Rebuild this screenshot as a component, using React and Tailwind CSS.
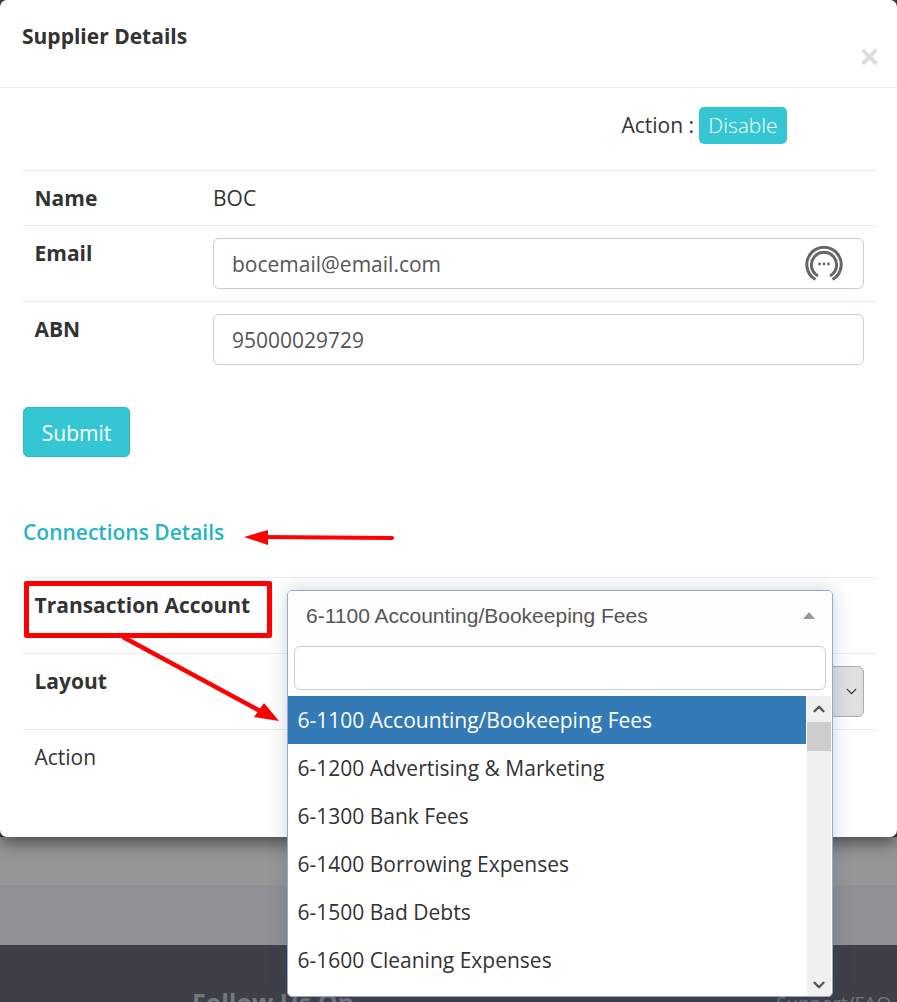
import { ChevronDown, ChevronUp } from "lucide-react";

const accounts = [
  "6-1200 Advertising & Marketing",
  "6-1300 Bank Fees",
  "6-1400 Borrowing Expenses",
  "6-1500 Bad Debts",
  "6-1600 Cleaning Expenses",
];

function PasswordIcon() {
  return (
    <svg viewBox="0 0 38 38" className="absolute right-[20px] top-[6px] w-[38px] h-[38px]" fill="none" stroke="#666666" strokeWidth="3">
      <path d="M10.5 34.5 A17.2 17.2 0 1 1 27.5 34.5" />
      <path d="M13 31 A12.6 12.6 0 1 1 25 31" />
      <circle cx="14.5" cy="19" r="1.4" fill="#666666" stroke="none" />
      <circle cx="19" cy="19" r="1.4" fill="#666666" stroke="none" />
      <circle cx="23.5" cy="19" r="1.4" fill="#666666" stroke="none" />
    </svg>
  );
}

function TransactionDropdown() {
  return (
    <div className="absolute left-[287px] top-[590px] w-[546px] h-[407px] bg-white border border-[#98a8c8] rounded-[5px] shadow-[0_0_18px_rgba(60,70,110,0.25)] overflow-hidden font-['Open_Sans',sans-serif]">
      <div className="h-[49px] flex items-center justify-between pl-[18px] pr-[17px] bg-[#fdfdfd] text-[#555555] text-[21px] font-['Liberation_Sans',sans-serif]">
        <span>6-1100 Accounting/Bookeeping Fees</span>
        <span className="w-0 h-0 border-x-[6px] border-x-transparent border-b-[7px] border-b-[#999999]"></span>
      </div>
      <div className="px-[6px] pt-[6px] pb-[6px]">
        <div className="h-[44px] border border-[#c5cde0] rounded-[6px] bg-white"></div>
      </div>
      <div className="flex">
        <ul className="w-[518px] text-[21px] leading-[30px] text-[#333333]">
          <li className="h-[48px] flex items-center pl-[9.5px] bg-[#337ab7] text-white">6-1100 Accounting/Bookeeping Fees</li>
          {accounts.map((name) => (
            <li key={name} className="h-[48px] flex items-center pl-[9.5px]">{name}</li>
          ))}
        </ul>
        <div className="flex-1 h-[301px] ml-px mr-px bg-[#f0f0f0] flex flex-col text-[#555555]">
          <div className="h-[26px] flex items-center justify-center">
            <ChevronUp size={18} strokeWidth={3.2} />
          </div>
          <div className="h-[29px] bg-[#cdcdcd]"></div>
          <div className="flex-1 flex items-end justify-center pb-[3px]">
            <ChevronDown size={18} strokeWidth={3.2} />
          </div>
        </div>
      </div>
    </div>
  );
}

function Annotations() {
  return (
    <>
      <div className="absolute left-[24px] top-[581px] w-[248px] h-[57px] border-[5px] border-[#ff0000] rounded-[2px]"></div>
      <svg className="absolute left-0 top-0 w-[897px] h-[1002px] pointer-events-none" viewBox="0 0 897 1002" fill="none">
        <path d="M392 538 L262 537" stroke="#ff0000" strokeWidth="4" strokeLinecap="round" />
        <path d="M244 537 L268 530 L268 545 Z" fill="#ff0000" />
        <path d="M123 637 L262 712" stroke="#ff0000" strokeWidth="4.5" />
        <path d="M279 721 L254 717 L264 703 Z" fill="#ff0000" />
      </svg>
    </>
  );
}

export default function App() {
  return (
    <div className="relative w-[897px] h-[1002px] overflow-hidden bg-[#3d4047] font-['Open_Sans',sans-serif] text-[#333333]">
      {/* MODAL */}
      <div className="relative z-10 h-[837px] bg-white rounded-[7px] shadow-[0_5px_18px_rgba(0,0,0,0.55)]">
        <div className="relative h-[88px] border-b border-[#e9ecef] pl-[22px] pr-[21px] pt-[21px]">
          <h4 className="text-[21px] leading-[30px] font-bold">Supplier Details</h4>
          <span className="absolute right-[18px] top-[42px] text-[#dcdcdc] text-[33px] leading-[30px] font-bold font-['Liberation_Sans',sans-serif]">×</span>
        </div>

        <div className="pl-[23px] pr-[21px]">
          <div className="h-[82px] flex items-start justify-end pt-[19px] pr-[89px] text-[21px]">
            <span className="leading-[37px] mr-[5px]">Action :</span>
            <button className="h-[37px] w-[88px] rounded-[5px] bg-[#35c6d4] text-white font-light text-[21px] leading-[37px]">Disable</button>
          </div>

          {/* SUPPLIER TABLE */}
          <div className="flex h-[55px] border-t border-[#e9ecef] text-[21px] items-center pl-[11.5px] pt-[2px]">
            <span className="w-[178.5px] font-bold">Name</span>
            <span>BOC</span>
          </div>
          <div className="flex h-[76px] border-t border-[#e9ecef] text-[21px] pl-[11.5px] pt-[12px]">
            <span className="w-[178.5px] font-bold leading-[30px]">Email</span>
            <div className="relative flex-1 mr-[12px] h-[51px] border border-[#c5cde0] rounded-[6px] flex items-center pl-[18px] pr-[18px] pt-[2px] text-[#555555]">
              bocemail@email.com
              <PasswordIcon />
            </div>
          </div>
          <div className="flex h-[76px] border-t border-[#e9ecef] text-[21px] pl-[11.5px] pt-[12px]">
            <span className="w-[178.5px] font-bold leading-[30px]">ABN</span>
            <div className="flex-1 mr-[12px] h-[51px] border border-[#c5cde0] rounded-[6px] flex items-center pl-[18px] pr-[18px] pt-[2px] text-[#555555]">
              95000029729
            </div>
          </div>

          <button className="block mt-[30px] w-[107px] h-[50px] pt-[3px] rounded-[5px] bg-[#35c6d4] border border-[#2fb5c3] text-white text-[21px]">Submit</button>

          <h5 className="mt-[60px] h-[60px] text-[21px] leading-[30px] text-[#26b4c4] font-semibold">Connections Details</h5>

          {/* CONNECTIONS TABLE */}
          <div className="flex h-[76px] border-t border-[#e9ecef] text-[21px] pl-[11.5px] pt-[12px]">
            <span className="font-bold leading-[30px]">Transaction Account</span>
          </div>
          <div className="flex h-[76px] border-t border-[#e9ecef] text-[21px] pl-[11.5px] pt-[12px]">
            <span className="w-[178.5px] font-bold leading-[30px]">Layout</span>
            <div className="ml-auto mr-[12px] w-[32px] h-[51px] rounded-r-[6px] border border-[#a9adba] bg-[#dfdfdf] flex items-center justify-center text-[#333333]">
              <ChevronDown size={17} strokeWidth={1.8} className="ml-[7px]" />
            </div>
          </div>
          <div className="flex h-[60px] border-t border-[#e9ecef] text-[21px] pl-[11.5px] pt-[12px]">
            <span className="leading-[30px]">Action</span>
          </div>
        </div>
      </div>

      {/* PAGE BEHIND THE OVERLAY */}
      <div className="h-[48px] bg-[#969696]"></div>
      <div className="h-[60px] bg-[#8f9094]"></div>
      <div className="h-[57px] bg-[#3d4047] flex justify-between pl-[192px] pr-[6px] text-[#75777c]">
        <span className="text-[25px] font-bold mt-[42px] leading-[30px]">Follow Us On</span>
        <span className="text-[19px] mt-[43px] leading-[30px]">Support/FAQ</span>
      </div>

      <div className="absolute inset-0 z-20">
        <Annotations />
        <TransactionDropdown />
      </div>
    </div>
  );
}
